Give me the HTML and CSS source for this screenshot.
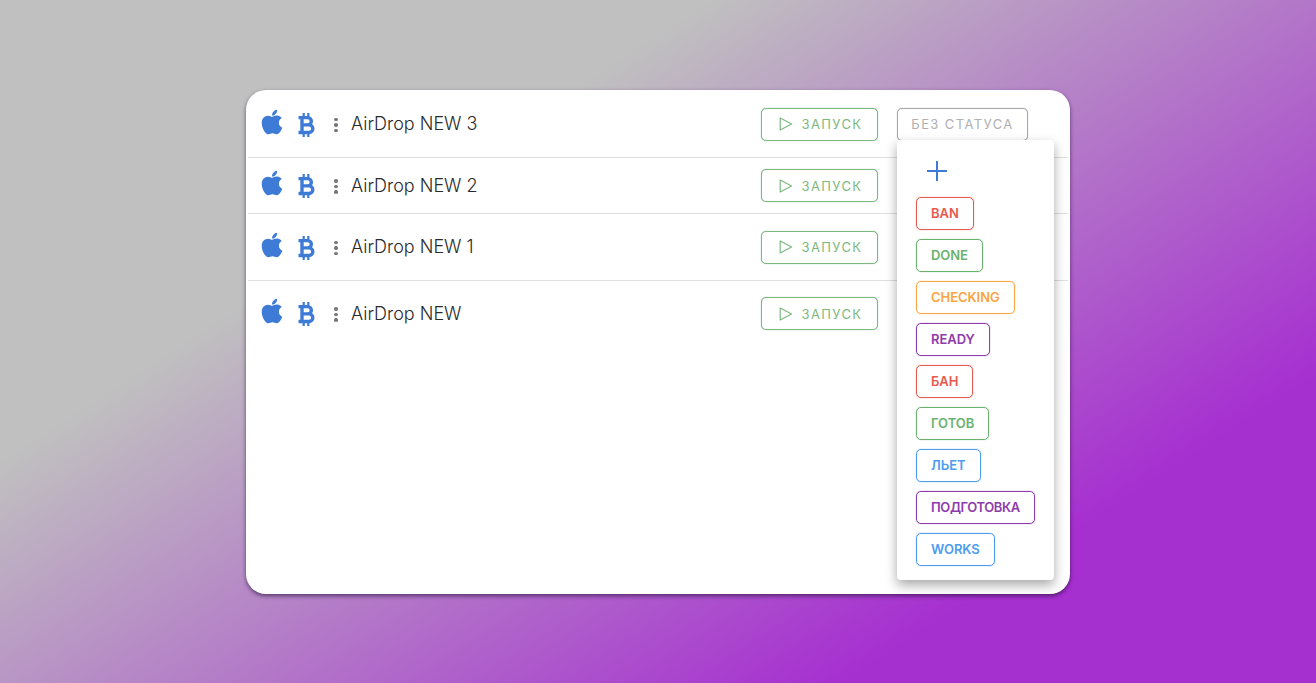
FILE: index.html
```html
<!DOCTYPE html>
<html lang="ru">
<head>
<meta charset="utf-8">
<title>AirDrop</title>
<link rel="stylesheet" href="styles.css">
</head>
<body>
<svg class="defs" width="0" height="0" aria-hidden="true">
  <symbol id="apple" viewBox="0 0 384 512"><path d="M318.7 268.7c-.2-36.7 16.4-64.4 50-84.8-18.8-26.9-47.2-41.7-84.7-44.6-35.5-2.8-74.3 20.7-88.5 20.7-15 0-49.4-19.7-76.4-19.7C63.3 141.2 4 184.8 4 273.5q0 39.3 14.4 81.2c12.8 36.7 59 126.7 107.2 125.2 25.2-.6 43-17.9 75.8-17.9 31.8 0 48.3 17.9 76.4 17.9 48.6-.7 90.4-82.5 102.6-119.3-65.2-30.7-61.7-90-61.7-91.9zm-56.6-164.2c27.3-32.4 24.8-61.9 24-72.5-24.1 1.4-52 16.4-67.9 34.9-17.5 19.8-27.8 44.3-25.6 71.9 26.1 2 49.9-11.4 69.5-34.3z"/></symbol>
  <symbol id="btc" viewBox="0 0 17 24"><g fill="none" stroke="currentColor" stroke-linejoin="round"><path stroke-width="3.4" d="M.5 4.6h9.2a3.6 3.6 0 0 1 0 7.3H4M4 11.9h7a3.8 3.8 0 0 1 0 7.6H.5M4 4.6v14.9"/><path stroke-width="2.2" d="M5.7 0v4M10.3 0v4M5.7 20v4M10.3 20v4"/></g></symbol>
  <symbol id="play" viewBox="0 0 14 14"><path d="M1.2 1v12l11.4-6z" fill="none" stroke="currentColor" stroke-width="1.2" stroke-linejoin="round"/></symbol>
</svg>
<main class="card">
  <div class="row row-tall">
    <svg class="ic-apple"><use href="#apple"/></svg>
    <svg class="ic-btc"><use href="#btc"/></svg>
    <span class="dots"><i></i><i></i><i></i></span>
    <span class="title">AirDrop NEW 3</span>
    <button class="run"><svg class="ic-play"><use href="#play"/></svg>ЗАПУСК</button>
    <div class="slot">
      <button class="status">БЕЗ СТАТУСА</button>
    </div>
  </div>
  <div class="row row-short">
    <svg class="ic-apple"><use href="#apple"/></svg>
    <svg class="ic-btc"><use href="#btc"/></svg>
    <span class="dots"><i></i><i></i><i></i></span>
    <span class="title">AirDrop NEW 2</span>
    <button class="run"><svg class="ic-play"><use href="#play"/></svg>ЗАПУСК</button>
    <div class="slot"></div>
  </div>
  <div class="row row-tall">
    <svg class="ic-apple"><use href="#apple"/></svg>
    <svg class="ic-btc"><use href="#btc"/></svg>
    <span class="dots"><i></i><i></i><i></i></span>
    <span class="title">AirDrop NEW 1</span>
    <button class="run"><svg class="ic-play"><use href="#play"/></svg>ЗАПУСК</button>
    <div class="slot"></div>
  </div>
  <div class="row row-last">
    <svg class="ic-apple"><use href="#apple"/></svg>
    <svg class="ic-btc"><use href="#btc"/></svg>
    <span class="dots"><i></i><i></i><i></i></span>
    <span class="title">AirDrop NEW</span>
    <button class="run"><svg class="ic-play"><use href="#play"/></svg>ЗАПУСК</button>
    <div class="slot"></div>
  </div>
  <div class="menu">
    <svg class="plus" viewBox="0 0 20 20"><path d="M10 0v20M0 10h20" stroke="currentColor" stroke-width="2" fill="none"/></svg>
    <span class="tag red">BAN</span>
    <span class="tag green">DONE</span>
    <span class="tag orange">CHECKING</span>
    <span class="tag purple">READY</span>
    <span class="tag red">БАН</span>
    <span class="tag green">ГОТОВ</span>
    <span class="tag blue">ЛЬЕТ</span>
    <span class="tag purple tag-tight">ПОДГОТОВКА</span>
    <span class="tag blue">WORKS</span>
  </div>
</main>
</body>
</html>
```
FILE: styles.css
```css
* { box-sizing: border-box; }
html, body { height: 100%; }
body {
  margin: 0;
  overflow: hidden;
  padding: 90px 246px 0;
  font-family: Inter, "Noto Sans", sans-serif;
  background: linear-gradient(147deg, #c0c0c0 30%, #a62fd0 80%) no-repeat;
}
.defs { position: absolute; }
.card {
  position: relative;
  width: 824px;
  height: 504px;
  background: #fff;
  border-radius: 20px;
  padding: 1px 2px 0;
  box-shadow: 0 2px 4px rgba(40, 20, 60, .65);
}
.row {
  display: flex;
  align-items: center;
  padding-left: 12px;
  padding-right: 40px;
  border-bottom: 1px solid #e0e0e0;
}
.row-tall { height: 67px; }
.row-short { height: 56px; }
.row-last { height: 65px; border-bottom: 0; }
.ic-apple { width: 24px; height: 28px; color: #3d7bd6; fill: currentColor; margin-top: -5px; }
.ic-btc { width: 17px; height: 24px; color: #3d7bd6; margin-left: 14px; margin-top: 1px; flex: none; }
.dots {
  display: flex;
  flex-direction: column;
  gap: 2px;
  width: 4px;
  margin-left: 19px;
  margin-top: 2px;
}
.dots i { width: 4px; height: 3.5px; border-radius: 50%; background: #757575; display: block; }
.title {
  flex: 1;
  margin-left: 13px;
  font-size: 18px;
  font-weight: 300;
  color: #2b2b2b;
  line-height: 24px;
}
.run, .status {
  display: flex;
  align-items: center;
  justify-content: center;
  height: 33px;
  font-family: inherit;
  font-size: 13px;
  letter-spacing: 1.4px;
  font-weight: 400;
  border-radius: 5px;
  background: #fff;
  padding: 0;
}
.run {
  width: 117px;
  color: #7db881;
  border: 1px solid #7db881;
  box-shadow: 0 0 1px #7db881;
  gap: 8px;
  padding-left: 3px;
}
.ic-play { width: 14px; height: 14px; }
.slot { width: 131px; height: 33px; margin-left: 19px; }
.status {
  width: 131px;
  color: #b0b0b0;
  border: 1px solid #a8a8a8;
  box-shadow: 0 0 1px #a8a8a8;
}
.menu {
  position: absolute;
  left: 651px;
  top: 50px;
  width: 157px;
  height: 440px;
  background: #fff;
  border-radius: 4px;
  box-shadow: 0 5px 12px rgba(0, 0, 0, .35);
  padding: 21px 19px 0;
  display: flex;
  flex-direction: column;
  align-items: flex-start;
  gap: 9px;
}
.plus { width: 20px; height: 20px; color: #3d7bd6; margin: 0 0 7px 11px; flex: none; }
.tag {
  display: flex;
  align-items: center;
  height: 33px;
  padding: 0 14px 1px;
  border: 1px solid currentColor;
  border-radius: 5px;
  font-size: 13px;
  letter-spacing: -.05px;
  font-weight: 600;
  flex: none;
  box-shadow: 0 0 1px currentColor;
}
.tag-tight { letter-spacing: -.4px; }
.red { color: #e8594f; }
.green { color: #6bb26f; }
.orange { color: #fba443; }
.purple { color: #8e3cab; }
.blue { color: #4d9cf0; }
```
